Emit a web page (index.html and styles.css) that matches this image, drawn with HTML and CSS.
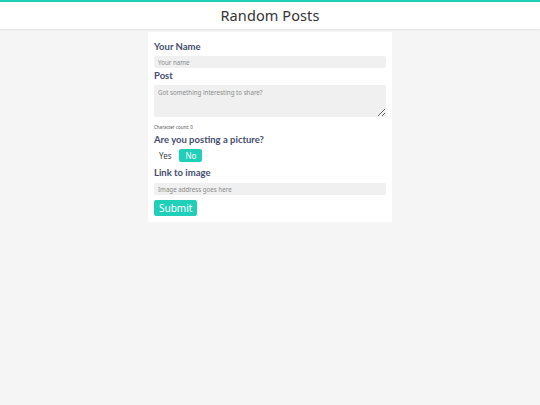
FILE: index.html
```html
<!DOCTYPE html>
<html>
<head>
<meta charset="utf-8">
<link rel="stylesheet" href="styles.css">
</head>
<body>
<header class="topbar">
  <h1 class="title">Random Posts</h1>
</header>
<main class="page">
  <form class="card">
    <label class="label">Your Name</label>
    <input class="field" type="text" placeholder="Your name">
    <label class="label">Post</label>
    <textarea class="field area" placeholder="Got something interesting to share?"></textarea>
    <div class="count">Character count: 0</div>
    <label class="label q">Are you posting a picture?</label>
    <div class="choices">
      <span class="choice">Yes</span>
      <span class="choice active">No</span>
    </div>
    <label class="label link">Link to image</label>
    <input class="field" type="text" placeholder="Image address goes here">
    <div class="actions"><button class="submit" type="button">Submit</button></div>
  </form>
</main>
</body>
</html>
```
FILE: styles.css
```css
* { box-sizing: border-box; }
html, body { margin: 0; padding: 0; }
body {
  background: #f5f5f5;
  font-family: "Noto Sans", "Open Sans", sans-serif;
  color: #3d4467;
  height: 405px;
}
.topbar {
  background: #fff;
  border-top: 2px solid #1fcfb8;
  height: 29px;
  box-shadow: 0 1px 2px rgba(0,0,0,0.08);
  display: flex;
  align-items: center;
  justify-content: center;
  padding-bottom: 2px;
}
.title {
  margin: 0;
  font-size: 14.5px;
  font-weight: 400;
  color: #333;
  letter-spacing: 0.1px;
}
.page {
  display: flex;
  justify-content: center;
  padding-top: 3px;
}
.card {
  background: #fff;
  width: 244px;
  padding: 9px 6px 6px;
  display: flex;
  flex-direction: column;
}
.label {
  font-family: Lato, "Noto Sans", sans-serif;
  font-size: 9.5px;
  font-weight: 700;
  color: #454c6e;
  line-height: 12px;
  margin-bottom: 3px;
}
.field {
  border: none;
  background: #f0f0f0;
  border-radius: 2px;
  height: 12px;
  font-family: "Noto Sans", sans-serif;
  font-size: 6.2px;
  padding: 0 4px;
  margin: 0 0 2px;
  width: 100%;
  outline: none;
  color: #555;
}
.field::placeholder { color: #8a8a8a; }
.area {
  height: 32px;
  padding: 3px 4px;
  resize: vertical;
  margin-bottom: 7px;
}
.count {
  font-size: 4.5px;
  color: #555;
  line-height: 6px;
  margin-bottom: 4px;
}
.q { margin-bottom: 3px; }
.choices {
  display: flex;
  gap: 7px;
  margin-bottom: 5px;
  padding-left: 4px;
}
.choice {
  font-size: 8px;
  line-height: 13px;
  height: 13px;
  color: #444;
  padding: 0 1px;
}
.choice.active {
  background: #1fcfb8;
  color: #fff;
  border-radius: 2px;
  padding: 0 6px;
}
.link { margin-bottom: 4px; }
.link + .field { margin-bottom: 5px; }
.actions { display: flex; }
.submit {
  border: none;
  background: #1fcfb8;
  color: #fff;
  font-family: "Noto Sans", sans-serif;
  font-size: 10px;
  height: 16px;
  line-height: 16px;
  padding: 0 5px;
  border-radius: 2px;
  margin: 0;
}
```
